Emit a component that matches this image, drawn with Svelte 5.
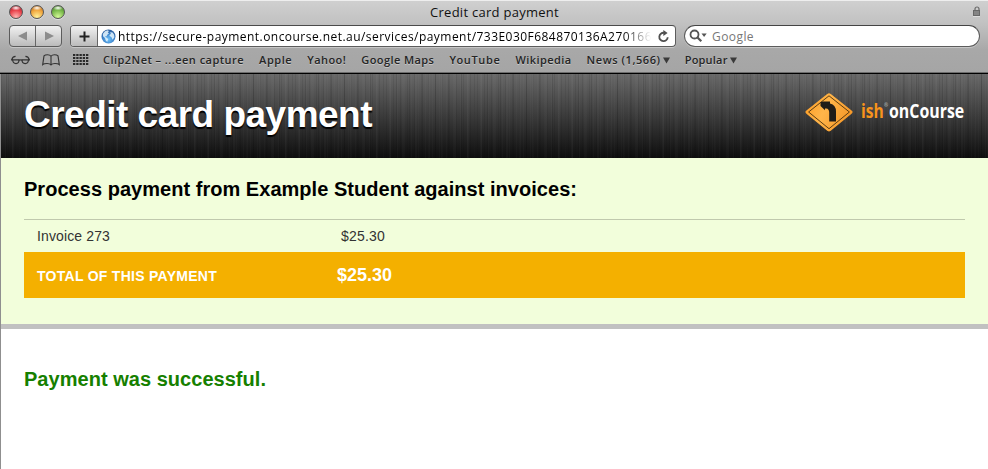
<script>
  const bookmarks = [
    { label: 'Clip2Net – ...een capture', width: 141 },
    { label: 'Apple', width: 33 },
    { label: 'Yahoo!', width: 39 },
    { label: 'Google Maps', width: 73 },
    { label: 'YouTube', width: 51 },
    { label: 'Wikipedia', width: 56 },
    { label: 'News (1,566)', width: 74, menu: true },
    { label: 'Popular', width: 43, menu: true }
  ];
  const lights = ['red', 'yellow', 'green'];
  const dots = [0, 1, 2, 3].flatMap((r) => [0, 1, 2, 3, 4].map((c) => [c * 3.25, r * 3]));

  // Spreads the letters of a label so that it takes up the given width.
  function fit(node, width) {
    const natural = node.getBoundingClientRect().width;
    node.style.letterSpacing = (width - natural) / node.textContent.length + 'px';
  }
</script>

<div class="window">
  <div class="chrome">
    <div class="titlebar">
      <div class="lights">
        {#each lights as color}<i class={color}></i>{/each}
      </div>
      <span class="title"><span class="fit" use:fit={129}>Credit card payment</span></span>
      <svg class="lock" width="8" height="11" viewBox="0 0 8 11">
        <path d="M2 5V3a2 2 0 0 1 4 0v2" fill="none" stroke="#696969" stroke-width="1.2" />
        <rect x=".5" y="4.5" width="6" height="5" fill="#858585" stroke="#686868" />
        <path d="M0 10.5h7" stroke="#ddd" />
      </svg>
    </div>

    <div class="toolbar">
      <div class="nav">
        <span><svg width="10" height="10"><path d="M9 .5v9L0 5z" fill="#8c8c8c" /></svg></span>
        <span><svg width="10" height="10"><path d="M1 .5v9L10 5z" fill="#8c8c8c" /></svg></span>
      </div>
      <div class="address">
        <span class="plus"><svg width="11" height="11"><path d="M5.5 .5v10M.5 5.5h10" stroke="#222" stroke-width="2" /></svg></span>
        <svg class="globe" width="15" height="15" viewBox="0 0 15 15">
          <defs>
            <radialGradient id="sea" cx=".5" cy=".7" r=".65">
              <stop offset="0" stop-color="#6fc2fa" /><stop offset=".65" stop-color="#3b80c8" /><stop offset="1" stop-color="#2c5f9f" />
            </radialGradient>
          </defs>
          <circle cx="7.5" cy="7.5" r="7" fill="url(#sea)" />
          <path d="M1.800 5 4 2.200 6.500 1.200 8 2 6.800 3.400 8 4.500 6.200 5.800 5.600 7.200 3.800 7.400 5.400 8.400 7.200 10 6.200 13 4.600 11.200 4 9 2.200 7.400zM9 3.200l2.600.2 1.500 2.300.3 2.600-1.800 2.400-1.300-2.800-1.900-.8.4-1.700 1.200-.4z" fill="#e2f2fc" opacity=".88" />
        </svg>
        <span class="url"><span class="fit" use:fit={534}>https://secure-payment.oncourse.net.au/services/payment/733E030F684870136A270166</span></span>
        <svg class="reload" width="13" height="13" viewBox="0 0 13 13">
          <path d="M10.7 7.2A4.2 4.2 0 1 1 7 2.8" fill="none" stroke="#505050" stroke-width="1.8" />
          <path d="M6.3 0v6L10.6 3z" fill="#505050" />
        </svg>
      </div>
      <div class="search">
        <svg width="19" height="14" viewBox="0 0 19 14">
          <circle cx="5.5" cy="5.5" r="4" fill="none" stroke="#555" stroke-width="1.8" />
          <path d="m8.3 8.3 4 4" stroke="#555" stroke-width="2.2" />
          <path d="M12.5 4.5h5.2L15.1 8z" fill="#555" />
        </svg>
        <span class="fit" use:fit={42}>Google</span>
      </div>
    </div>

    <div class="bookmarks">
      <svg class="glasses" width="19" height="10" viewBox="0 0 19 10" fill="none" stroke="#333" stroke-width="1.15">
        <path d="M1.600 4.800H8Q8 8.600 5 8.600T1.600 4.800zM11 4.800h6.400Q17.400 8.600 14.200 8.600T11 4.800z" />
        <path d="M7.800 5.300q1.700-1 3.400 0M2 4.800H0M17 4.800H19M.8 4.600Q1.400 1.600 4.600 1.400M18.200 4.600Q17.600 1.600 14.400 1.400" />
      </svg>
      <svg class="book" width="18" height="12" viewBox="0 0 18 12" fill="none" stroke="#333" stroke-width="1.1">
        <path d="M9 10.500V2.200Q8 .7 5.500 .7T2 1.800L.7 10.600Q2 9.500 5 9.500t4 1.400q1-1.400 4-1.400t4.300 1.100L16 1.800Q15 .7 12.500 .7T9 2.200" />
      </svg>
      <svg class="grid" width="16" height="12" viewBox="0 0 16 12">
        {#each dots as [x, y]}<rect {x} {y} width="2.300" height="2" fill="#292929" />{/each}
      </svg>
      {#each bookmarks as b}
        <span class="bookmark">
          <span class="box" style="width:{b.width}px"><span class="fit" use:fit={b.width}>{b.label}</span></span>
          {#if b.menu}<svg width="7" height="7"><path d="M0 .5h7L3.500 6.500z" fill="#3a3a3a" /></svg>{/if}
        </span>
      {/each}
    </div>
  </div>

  <main>
    <header>
      <h1><span class="fit" use:fit={348}>Credit card payment</span></h1>
      <div class="logo">
        <svg width="50" height="42" viewBox="0 0 50 42">
          <defs>
            <linearGradient id="sign" x1="0" y1="0" x2="1" y2=".4">
              <stop offset="0" stop-color="#ff9a1e" /><stop offset=".5" stop-color="#ffb54a" /><stop offset="1" stop-color="#f79a2a" />
            </linearGradient>
          </defs>
          <path d="M24 2.500 47 21 24 40.500 1 21z" fill="#111" opacity=".5" />
          <path d="M22.200 2q1.800-1.400 3.600 0L46.600 18.500q2 1.500 0 3.200L25.800 38.700q-1.800 1.400-3.600 0L1.400 21.700q-2-1.700 0-3.200z" fill="url(#sign)" />
          <path d="M24 3.800 44.400 20 24 36.700 3.600 20z" fill="none" stroke="#4a300d" stroke-width=".9" />
          <path d="M15.500 10.200 17.500 9.600H25v1.800q6 1.200 6 8.200v10h-6.800v-9q0-4-3-4.200H20v1.800L15.500 14z" fill="#211d18" />
        </svg>
        <span class="ish">ish</span><sup>®</sup><span class="name">onCourse</span>
      </div>
    </header>

    <section class="invoices">
      <h2><span class="fit" use:fit={553}>Process payment from Example Student against invoices:</span></h2>
      <div class="row">
        <span class="label"><span class="fit" use:fit={73}>Invoice 273</span></span>
        <span class="amount"><span class="fit" use:fit={44}>$25.30</span></span>
      </div>
      <div class="row total">
        <span class="label"><span class="fit" use:fit={180}>TOTAL OF THIS PAYMENT</span></span>
        <span class="amount"><span class="fit" use:fit={55}>$25.30</span></span>
      </div>
    </section>

    <h2 class="success"><span class="fit" use:fit={242}>Payment was successful.</span></h2>
  </main>
</div>

<style>
  :global(body) { background: #fff; }
  .window { width: 988px; height: 469px; overflow: hidden; box-sizing: border-box; font-family: "Liberation Sans", Arial, sans-serif; }
  .window * { box-sizing: border-box; }
  svg { display: block; flex: none; }
  .fit { display: inline-block; white-space: pre; }

  .chrome {
    height: 74px;
    border-bottom: 1px solid #000;
    box-shadow: inset 0 1px #eee, inset 0 -1px #6c6c6c;
    background: linear-gradient(#d0d0d0 0, #c1c1c1 24px, #a8a8a8 50px, #a5a5a5 73px);
    font-family: "Open Sans", "Noto Sans", sans-serif;
    color: #111;
  }
  .titlebar { height: 25px; display: flex; align-items: center; padding: 0 7px 2px 9px; }
  .lights { display: flex; gap: 7px; width: 120px; }
  .lights i { width: 14px; height: 14px; border-radius: 50%; border: 1px solid #555; box-shadow: 0 1px #ddd; }
  .red { background: radial-gradient(ellipse 5px 2.500px at 50% 16%, #fff, #fff0), radial-gradient(circle at 50% 90%, #ffb6b2, #e9424b 55%, #94212b); }
  .yellow { background: radial-gradient(ellipse 5px 2.500px at 50% 16%, #fff, #fff0), radial-gradient(circle at 50% 90%, #fff29a, #f0a63e 55%, #a65b16); }
  .green { background: radial-gradient(ellipse 5px 2.500px at 50% 16%, #fff, #fff0), radial-gradient(circle at 50% 90%, #d4fa98, #79b94a 55%, #3c7626); }
  .title { flex: 1; text-align: center; font-size: 13px; line-height: 24px; }
  .lock { margin-left: 113px; }

  .toolbar { height: 22px; display: flex; padding: 0 7px 0 9px; }
  .nav, .address { height: 22px; border: 1px solid #5c5c5c; border-radius: 4px; display: flex; box-shadow: 0 1px #c7c7c7; }
  .nav { width: 53px; margin-right: 8px; background: linear-gradient(#f1f1f1, #bbb); }
  .nav span { flex: 1; display: grid; place-items: center; }
  .nav span:first-child { border-right: 1px solid #666; }
  .address { width: 606px; margin-right: 8px; background: #fff; align-items: center; overflow: hidden; border-top-color: #4a4a4a; }
  .plus { width: 27px; height: 20px; display: grid; place-items: center; background: linear-gradient(#f1f1f1, #bbb); border-right: 1px solid #666; }
  .globe { margin-left: 3px; }
  .url {
    width: 534px; margin-left: 2px; font-size: 12px; line-height: 20px; padding-top: 1px; white-space: nowrap; color: #000;
    -webkit-mask-image: linear-gradient(90deg, #000 505px, transparent 533px);
    mask-image: linear-gradient(90deg, #000 505px, transparent 533px);
  }
  .reload { margin-left: 5px; }
  .search { width: 296px; height: 22px; border: 1px solid #5c5c5c; border-top-color: #444; border-radius: 11px; background: #fff; display: flex; align-items: center; padding-left: 4px; font-size: 12px; line-height: 20px; color: #777; box-shadow: 0 1px #c7c7c7; }
  .search .fit { margin: 1px 0 0 4px; }

  .bookmarks { height: 26px; display: flex; align-items: center; padding-left: 11px; font-size: 11px; font-weight: 600; line-height: 26px; color: #252525; text-shadow: 0 1px #c5c5c5; }
  .glasses { margin-right: 11.500px; }
  .book { margin-right: 13px; }
  .grid { margin-right: 14.500px; }
  .bookmark { display: flex; align-items: center; gap: 2px; margin-right: 15.100px; }
  .box { display: block; white-space: nowrap; }

  main { height: 395px; border-left: 1px solid #8f8f8f; background: #fff; }
  header {
    height: 84px; display: flex; align-items: center; justify-content: space-between; padding: 0 23px;
    background:
      repeating-linear-gradient(90deg, #00000014 0 1px, #0000 1px 4px, #ffffff05 4px 5px, #0000 5px 7px),
      repeating-linear-gradient(90deg, #0000 0 5px, #0000001c 5px 6px, #0000 6px 11px, #ffffff06 11px 13px),
      linear-gradient(#686868, #0e0e0e);
  }
  h1 { margin: 0; font-size: 37px; line-height: 80px; padding-bottom: 2px; color: #fff; text-shadow: 0 2px 1px #000; }
  .logo { display: flex; align-items: center; width: 160px; padding-bottom: 7px; font-family: "Open Sans", "Noto Sans", sans-serif; font-weight: 700; font-size: 20px; line-height: 40px; }
  .logo svg { margin-right: 6px; }
  .ish, .name { transform-origin: 0 50%; white-space: nowrap; }
  .ish { width: 23px; color: #f7941d; transform: translateY(-2px) scaleX(.78); }
  .name { width: 76px; color: #fff; transform: translateY(-2px) scaleX(.795); }
  sup { width: 5px; font-size: 5px; line-height: 8px; margin-bottom: 16px; color: #aaa; }

  .invoices { height: 171px; border-bottom: 5px solid #c1c1c1; background: #f2fedb; padding: 0 23px; }
  h2 { margin: 0; font-size: 20px; line-height: 61px; height: 61px; color: #000; }
  .invoices h2 { padding-top: 1px; }
  .row { height: 33px; border-top: 1px solid #c0c9ad; display: flex; align-items: center; padding-left: 13px; font-size: 14px; color: #333; }
  .label { width: 304px; }
  .total { height: 46px; border: 0; background: #f4b000; color: #fff; font-weight: 700; }
  .total .label { width: 300px; padding-top: 2px; }
  .total .amount { font-size: 18px; }
  .success { height: 100px; line-height: 101px; padding-left: 23px; color: #168000; }
</style>
